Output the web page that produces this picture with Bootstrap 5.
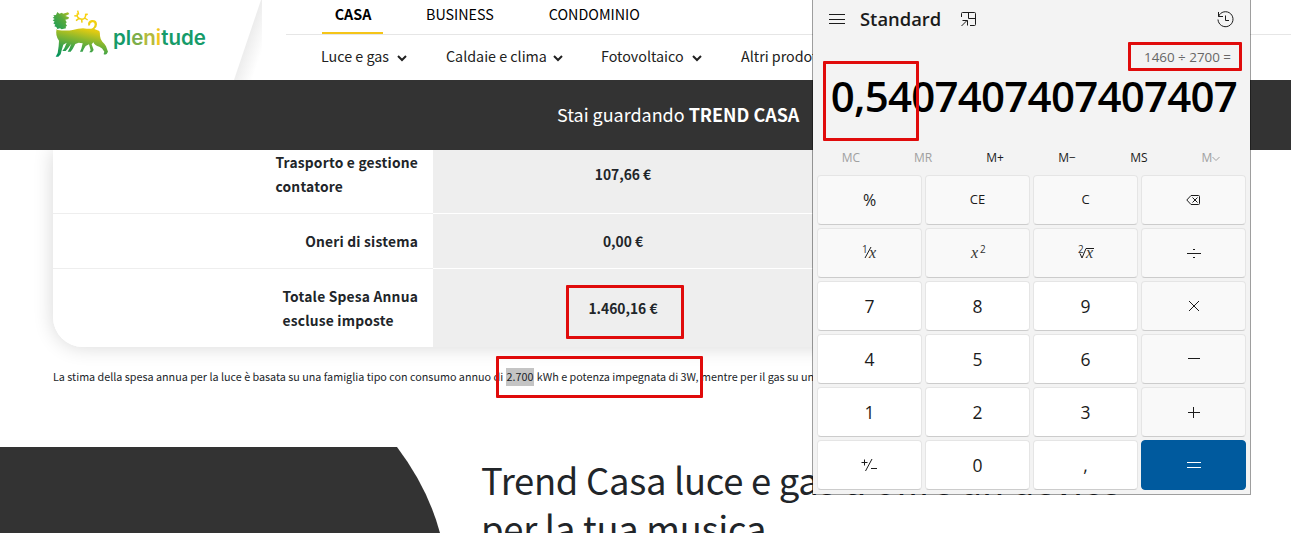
<!DOCTYPE html>
<html lang="it">
<head>
<meta charset="utf-8">
<meta name="viewport" content="width=device-width, initial-scale=1">
<title>Plenitude - Trend Casa</title>
<link href="https://cdn.jsdelivr.net/npm/bootstrap@5.3.0/dist/css/bootstrap.min.css" rel="stylesheet">
<style>
html,body{height:533px;overflow:hidden}
body{font-family:"Noto Sans CJK JP",sans-serif;color:#212529;background:#fff;position:relative}
.site-head{height:80px;position:relative;z-index:2}
.brand-area{width:286px;height:80px}
.brand-area>svg{left:0;top:0}
.dog-mark{margin-top:-8px}
.wordmark{font:600 20.5px/24px Inter,sans-serif;color:#169b69;margin-left:3px;margin-top:-5px}
.w-e{color:#7cae4a}.w-n{color:#b3ba3e}.w-i{color:#f3c61c}
.top-nav{height:35px;border-bottom:1px solid #e6e6e6;padding-left:36px;font-size:14.3px;line-height:28px;color:#000}
.top-nav a,.sub-nav a{color:inherit;text-decoration:none;white-space:nowrap}
.top-nav a{height:34px}
.top-nav .current{font-weight:700;border-bottom:2px solid #f5c518;width:61px;text-align:center;padding-left:1px}
.sub-nav{height:45px;padding-left:35px;font-size:14.3px;line-height:42px;color:#212121}
.sub-nav svg{margin-left:8px}
.band{height:70px;background:#333;color:#fff;font-size:17.95px;line-height:69px;padding-left:557px;z-index:2;white-space:nowrap}
.prices{margin-left:53px;width:1168px;border-radius:0 0 30px 30px;box-shadow:0 0 20px rgba(0,0,0,.16);overflow:hidden;font-size:13.8px;font-weight:700;line-height:24px}
.lab{width:380px;padding-right:15px;border-bottom:1px solid #eee;background:#fff;letter-spacing:.2px}
.val{width:380px;background:#eee;border-bottom:1px solid #fff}
.val span{margin-top:12px}
.r1{height:64px}.r2{height:55px}.r3{height:78px}
.r3>div{border-bottom:0}
.note{margin:21px 0 0 53px;font-size:10.77px;line-height:18px;white-space:nowrap}
.sel{background:#c4c4c4;display:inline-block;height:18px;padding-left:1px;padding-right:1px}
.promo{margin-top:61px;height:86px;overflow:hidden}
.promo h1{font-size:36.4px;letter-spacing:-.28px;line-height:47.500px;font-weight:400;margin:9px 0 0 41px;white-space:nowrap}
.calc{left:812px;top:0;width:439px;height:495px;background:#f3f3f3;background-clip:padding-box;border:1px solid rgba(0,0,0,.38);border-top:0;z-index:5;font-family:"Open Sans",sans-serif;color:#1b1b1b}
.calc-head{height:38px;padding:0 16px 0 16px}
.calc-head b{font-weight:600;font-size:18.4px;line-height:38px;margin-left:15px;margin-right:20px}
.expr{height:38px;line-height:38px;font-size:13.4px;color:#666;padding-right:19px}
.display-num{height:40px;line-height:40px;font-size:42px;font-weight:600;color:#000;padding-right:13px;white-space:nowrap;letter-spacing:-.75px}
.mem{height:36px;margin:23px 2px 0;font-size:12px;line-height:38px}
.mem span{width:72px;text-align:center}
.mem .off{color:#a0a0a0}
.keys{display:grid;grid-template-columns:repeat(4,105px);grid-auto-rows:50px;gap:3px;padding:0 4px}
.key{background:#f9f9f9;border:1px solid #e5e5e5;border-bottom-color:#ccc;border-radius:4px;font-size:13px;padding:0;color:#1b1b1b;display:flex;align-items:center;justify-content:center}
.key svg{overflow:visible}
.num{background:#fff;font-size:17.5px}
.eq{background:#005a9e;border-color:#005a9e}
.hl{border:3px solid #e00b0b;border-radius:1px;z-index:9}
.h1x{left:823px;top:61px;width:96px;height:80px}
.h2x{left:1128px;top:42px;width:114px;height:29px}
.h3x{left:566px;top:285px;width:118px;height:54px}
.h4x{left:496px;top:356px;width:207px;height:42px}
.ln{fill:none;stroke:#1b1b1b;stroke-width:1}
.ser{font:italic 16px "Liberation Serif",serif;fill:#333}
.sml{font:10px "Open Sans",sans-serif;fill:#333}
</style>
</head>
<body>
<header class="site-head d-flex bg-white">
  <div class="brand-area position-relative d-flex align-items-center">
    <svg class="position-absolute" width="286" height="80">
      <defs><linearGradient id="edge" gradientUnits="userSpaceOnUse" x1="247" y1="40" x2="264" y2="46"><stop offset="0" stop-color="#ececec"/><stop offset="1" stop-color="#fff"/></linearGradient></defs>
      <path d="M261 0h1v80h-28z" fill="url(#edge)"/>
    </svg>
    <svg class="ms-5 dog-mark" width="62" height="64" viewBox="24 14 186 192">
      <defs><linearGradient id="dog" gradientUnits="userSpaceOnUse" x1="125" y1="45" x2="95" y2="180"><stop offset="0" stop-color="#fbd20e"/><stop offset=".3" stop-color="#e1cb12"/><stop offset=".52" stop-color="#8cb82d"/><stop offset=".75" stop-color="#3fa348"/><stop offset="1" stop-color="#00925f"/></linearGradient>
      <linearGradient id="dhead" x1="0" x2="1" y1="1" y2="0"><stop offset="0" stop-color="#139b5b"/><stop offset=".6" stop-color="#58aa3d"/><stop offset="1" stop-color="#b9c21f"/></linearGradient></defs>
      <path fill="url(#dhead)" d="M40 48l8-1 4-9 6 5 8-3 3 3 15-4 4 5-12 6 11 4-2 5-9 2 4 8-3 4 4 6-4 3 1 5-13 3-5-3-8 2-3-6-6-2 3-5-6-4 4-5-6-4 6-4-6-4 5-3z"/>
      <path fill="url(#dog)" d="M52 92q28 3 46 0 25-7 42-4 22 3 24-12 0-9-8-7-7 3-6 9l-5 1q-4-14 10-17 16-1 16 13 0 10-8 14l15 6q3 7 2 15 1 10 7 17 9 8 11 14l6 16-4 7q-8 3-9 0l2-7q-6-12-15-15-14-3-18-13l-5 6 6 17-5 7h-8l4-6-5-18-10 5-6 10-3 7h-8l4-9 4-16-12-2-10 4-8 15-6 8h-9l5-9 6-15-10 14-7 8h-10l6-8 7-17-10 6-5 17-3 12-7 7h-8l6-11 3-21 1-16q-12-16-7-36z"/>
      <g fill="none" stroke="url(#dog)" stroke-width="4.500"><path d="M112 42q-3 16 14 18 12-1 11-17m-25 7l-9-1m13 9l-8 6m17-4l1 10m8-14l9 6m-6-15l6-3m-27 2l-3-12"/></g>
    </svg>
    <span class="wordmark">pl<span class="w-e">e</span><span class="w-n">n</span><span class="w-i">i</span>tude</span>
  </div>
  <div class="flex-grow-1">
    <nav class="top-nav d-flex">
      <a class="current" href="#">CASA</a><a href="#" style="margin-left:43px">BUSINESS</a><a href="#" style="margin-left:55px">CONDOMINIO</a>
    </nav>
    <nav class="sub-nav d-flex">
      <a href="#" style="width:125px">Luce e gas<svg width="10" height="7"><path d="M1 1l4 4 4-4" fill="none" stroke="#212121" stroke-width="2"/></svg></a>
      <a href="#" style="width:155px">Caldaie e clima<svg width="10" height="7" style="margin-left:6px"><path d="M1 1l4 4 4-4" fill="none" stroke="#212121" stroke-width="2"/></svg></a>
      <a href="#" style="width:140px">Fotovoltaico<svg width="10" height="7"><path d="M1 1l4 4 4-4" fill="none" stroke="#212121" stroke-width="2"/></svg></a>
      <a href="#">Altri prodotti</a>
    </nav>
  </div>
</header>
<div class="band position-relative">Stai guardando <b>TREND CASA</b></div>

<main>
  <section class="prices">
    <div class="d-flex r1"><div class="lab d-flex justify-content-end"><div>Trasporto e gestione<br>contatore</div></div><div class="val d-flex justify-content-center"><span>107,66 €</span></div><div class="val flex-grow-1"></div></div>
    <div class="d-flex r2"><div class="lab d-flex justify-content-end align-items-center">Oneri di sistema</div><div class="val d-flex justify-content-center align-items-center">0,00 €</div><div class="val flex-grow-1"></div></div>
    <div class="d-flex r3"><div class="lab d-flex justify-content-end align-items-center"><div>Totale Spesa Annua<br>escluse imposte</div></div><div class="val d-flex justify-content-center align-items-center">1.460,16 €</div><div class="val flex-grow-1"></div></div>
  </section>
  <p class="note">La stima della spesa annua per la luce è basata su una famiglia tipo con consumo annuo di <span class="sel">2.700</span> kWh e potenza impegnata di 3W, mentre per il gas su un</p>
  <section class="promo d-flex">
    <svg class="flex-shrink-0" width="440" height="86"><path d="M0 0H397Q428 41 440 86H0z" fill="#333"/></svg>
    <h1>Trend Casa luce e gas ti offre un device<br>per la tua musica</h1>
  </section>
</main>

<aside class="calc position-absolute">
  <div class="calc-head d-flex align-items-center">
    <svg width="16" height="12"><path class="ln" d="M0 1.500h16M0 6.500h16M0 10.500h16"/></svg>
    <b>Standard</b>
    <svg width="15" height="15"><path class="ln" d="M.5 5V1.500Q.5.5 1.500.5H13.500Q14.500.5 14.500 1.500V12.500Q14.500 13.500 13.500 13.500H9M7.500.5V6.500H14.500M.5 14L6 8.500M1.500 8.500H6.500V13.500"/></svg>
    <svg class="ms-auto" width="17" height="17"><path class="ln" d="M1.500 5.500A7.500 7.500 0 1 1 1 8.500M1.500 1V5.500H6M8.500 4.500V9.500H12"/></svg>
  </div>
  <div class="expr text-end">1460 ÷ 2700 =</div>
  <div class="display-num text-end">0,5407407407407407</div>
  <div class="mem d-flex"><span class="off">MC</span><span class="off">MR</span><span>M+</span><span>M−</span><span>MS</span><span class="off">M<svg width="8" height="6"><path d="M.5 1l3.500 3.500L7.500 1" fill="none" stroke="#a0a0a0"/></svg></span></div>
  <div class="keys">
    <button class="key" style="font-size:16px">%</button><button class="key">CE</button><button class="key">C</button>
    <button class="key"><svg width="15" height="12"><path class="ln" d="M5 1.500H12.500Q13.500 1.500 13.500 2.500V9.500Q13.500 10.500 12.500 10.500H5L.8 6zM6.500 3.500l5 5M11.500 3.500l-5 5"/></svg></button>
    <button class="key"><svg width="18" height="18"><text class="sml" x="1" y="9">1</text><path class="ln" d="M4 14L10 3"/><text class="ser" x="8" y="14">x</text></svg></button>
    <button class="key"><svg width="18" height="18"><text class="ser" x="2" y="14">x</text><text class="sml" x="11" y="9">2</text></svg></button>
    <button class="key"><svg width="18" height="18"><text class="sml" x="1" y="9">2</text><path class="ln" d="M3 9.500L5 14L9 4.500H17"/><text class="ser" x="9" y="14">x</text></svg></button>
    <button class="key"><svg width="14" height="12"><path class="ln" d="M0 6.500h14M6 2.500h2M6 10.500h2"/></svg></button>
    <button class="key num">7</button><button class="key num">8</button><button class="key num">9</button>
    <button class="key"><svg width="12" height="12"><path class="ln" d="M1 1l10 10M11 1L1 11"/></svg></button>
    <button class="key num">4</button><button class="key num">5</button><button class="key num">6</button>
    <button class="key"><svg width="12" height="12"><path class="ln" d="M0 5.500h12"/></svg></button>
    <button class="key num">1</button><button class="key num">2</button><button class="key num">3</button>
    <button class="key"><svg width="12" height="12"><path class="ln" d="M0 6.500h12M5.500 1v11"/></svg></button>
    <button class="key num"><svg width="17" height="14"><path class="ln" d="M.5 4.500h6M3.500 1.500v6M4.500 13L11 1M10 10.500h6"/></svg></button><button class="key num">0</button><button class="key num">,</button>
    <button class="key eq"><svg width="14" height="8"><path d="M0 1.500h14M0 6.500h14" stroke="#fff"/></svg></button>
  </div>
</aside>

<div class="hl position-absolute h1x"></div>
<div class="hl position-absolute h2x"></div>
<div class="hl position-absolute h3x"></div>
<div class="hl position-absolute h4x"></div>
<script src="https://cdn.jsdelivr.net/npm/bootstrap@5.3.0/dist/js/bootstrap.bundle.min.js"></script>
</body>
</html>
